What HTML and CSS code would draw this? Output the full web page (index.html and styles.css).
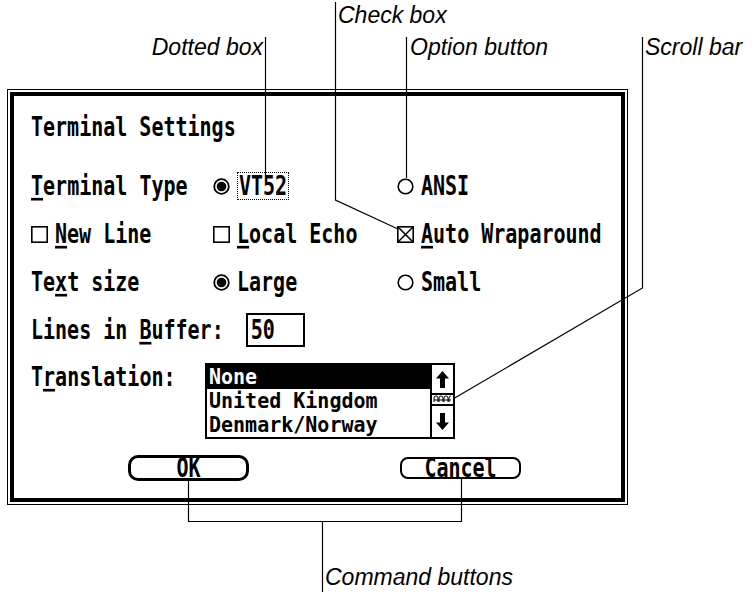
FILE: index.html
```html
<!DOCTYPE html>
<html>
<head>
<meta charset="utf-8">
<link rel="stylesheet" href="styles.css">
</head>
<body>
<div class="figure">
  <div class="frame">
    <div class="dialog">
      <div class="title"><span class="tx">Terminal Settings</span></div>

      <div class="grid">
        <div class="cell"><span class="tx"><u>T</u>erminal Type</span></div>
        <div class="cell">
          <svg class="ico" viewBox="0 0 17 17"><circle cx="8.5" cy="8.5" r="7.3" fill="none" stroke="#000" stroke-width="1.8"/><circle cx="8.5" cy="8.5" r="4.8" fill="#000"/></svg>
          <span class="focus"><span class="tx">VT52</span></span>
        </div>
        <div class="cell">
          <svg class="ico" viewBox="0 0 17 17"><circle cx="8.5" cy="8.5" r="7.3" fill="none" stroke="#000" stroke-width="1.6"/></svg>
          <span class="tx">ANSI</span>
        </div>

        <div class="cell">
          <svg class="ico" viewBox="0 0 17 17"><rect x="0.8" y="0.8" width="15.4" height="15.4" fill="none" stroke="#000" stroke-width="1.6"/></svg>
          <span class="tx"><u>N</u>ew Line</span>
        </div>
        <div class="cell">
          <svg class="ico" viewBox="0 0 17 17"><rect x="0.8" y="0.8" width="15.4" height="15.4" fill="none" stroke="#000" stroke-width="1.6"/></svg>
          <span class="tx"><u>L</u>ocal Echo</span>
        </div>
        <div class="cell">
          <svg class="ico" viewBox="0 0 17 17"><rect x="0.8" y="0.8" width="15.4" height="15.4" fill="none" stroke="#000" stroke-width="1.6"/><path d="M1 1 L16 16 M16 1 L1 16" stroke="#000" stroke-width="1.5"/></svg>
          <span class="tx"><u>A</u>uto Wraparound</span>
        </div>

        <div class="cell"><span class="tx">Te<u>x</u>t size</span></div>
        <div class="cell">
          <svg class="ico" viewBox="0 0 17 17"><circle cx="8.5" cy="8.5" r="7.3" fill="none" stroke="#000" stroke-width="1.8"/><circle cx="8.5" cy="8.5" r="4.8" fill="#000"/></svg>
          <span class="tx">Large</span>
        </div>
        <div class="cell">
          <svg class="ico" viewBox="0 0 17 17"><circle cx="8.5" cy="8.5" r="7.3" fill="none" stroke="#000" stroke-width="1.6"/></svg>
          <span class="tx">Small</span>
        </div>
      </div>

      <div class="row buffer">
        <span class="tx">Lines in <u>B</u>uffer:</span>
        <div class="field"><span class="tx">50</span></div>
      </div>

      <div class="row translation">
        <div class="label-col"><span class="tx">T<u>r</u>anslation:</span></div>
        <div class="listbox">
          <div class="items">
            <div class="item sel"><span class="tx">None</span></div>
            <div class="item"><span class="tx">United Kingdom</span></div>
            <div class="item"><span class="tx">Denmark/Norway</span></div>
          </div>
          <div class="scroll">
            <div class="arrow up">
              <svg viewBox="0 0 13 17" width="13" height="17"><path d="M6.5 0 L13 7.5 L9 7.5 L9 17 L4 17 L4 7.5 L0 7.5 Z" fill="#000"/></svg>
            </div>
            <div class="thumb">
              <svg viewBox="0 0 19 9" width="19" height="9"><path d="M1 7 V3 Q1 1 3 1 Q5 1 5 3 V7 M6 7 V3 Q6 1 8 1 Q10 1 10 3 V7 M11 7 V3 Q11 1 13 1 Q15 1 15 3 V7 M16 7 V3 Q16 1 18 1 M1 5 H18" fill="none" stroke="#000" stroke-width="1"/></svg>
            </div>
            <div class="arrow down">
              <svg viewBox="0 0 13 17" width="13" height="17"><path d="M6.5 17 L13 9.5 L9 9.5 L9 0 L4 0 L4 9.5 L0 9.5 Z" fill="#000"/></svg>
            </div>
          </div>
        </div>
      </div>

      <div class="buttons">
        <div class="btn default"><span class="tx">OK</span></div>
        <div class="btn"><span class="tx">Cancel</span></div>
      </div>
    </div>
  </div>

  <svg class="callouts" viewBox="0 0 754 594" width="754" height="594">
    <g fill="none" stroke="#000" stroke-width="1.2">
      <path d="M265.5 37 V175"/>
      <path d="M335.5 2 V200 L398 229"/>
      <path d="M406.5 37 V178"/>
      <path d="M642.5 37 V288 L453 399"/>
      <path d="M188.5 481 V521.5 H461.5 V479"/>
      <path d="M322.5 521.5 V592"/>
    </g>
  </svg>
  <span class="note n-dotted">Dotted box</span>
  <span class="note n-check">Check box</span>
  <span class="note n-option">Option button</span>
  <span class="note n-scroll">Scroll bar</span>
  <span class="note n-command">Command buttons</span>
</div>
</body>
</html>
```

FILE: styles.css
```css
html, body {
  margin: 0;
  padding: 0;
  background: #fff;
}

.figure {
  position: relative;
  width: 754px;
  height: 594px;
  overflow: hidden;
  background: #fff;
  color: #000;
  font-family: "DejaVu Sans Mono", "Liberation Mono", monospace;
  font-weight: bold;
  font-size: 20px;
}

.frame {
  margin: 89px 0 0 7px;
  width: 621px;
  box-sizing: border-box;
  border: 1px solid #000;
  padding: 2px;
}

.dialog {
  border: 4px solid #000;
  padding: 0 0 17px 17px;
}

.tx {
  display: inline-block;
  white-space: pre;
  line-height: 28px;
  transform: scaleY(1.32);
}

.tx u {
  text-decoration: underline;
  text-decoration-thickness: 2px;
  text-underline-offset: 2px;
}

.title {
  height: 40px;
  margin-top: 11px;
  display: flex;
  align-items: center;
}

.grid {
  margin-top: 19px;
  display: grid;
  grid-template-columns: 182px 184px 1fr;
  grid-auto-rows: 40px;
  row-gap: 8px;
}

.cell {
  display: flex;
  align-items: center;
  gap: 7px;
}

.ico {
  width: 17px;
  height: 17px;
  flex: none;
}

.focus {
  display: inline-flex;
  align-items: center;
  height: 26px;
  padding: 0 1px;
  border: 1px dotted #000;
}

.focus .tx {
  line-height: 19px;
}

.row {
  display: flex;
  align-items: center;
}

.buffer {
  height: 40px;
  margin-top: 8px;
  gap: 22px;
}

.field {
  width: 59px;
  height: 34px;
  box-sizing: border-box;
  border: 2px solid #000;
  padding-left: 3px;
  display: flex;
  align-items: center;
}

.field .tx {
  line-height: 22px;
}

.translation {
  margin-top: 13px;
  align-items: flex-start;
}

.label-col {
  width: 174px;
  height: 28px;
  display: flex;
  align-items: center;
}

.label-col .tx {
  line-height: 20px;
}

.listbox {
  width: 250px;
  height: 76px;
  box-sizing: border-box;
  border: 2px solid #000;
  display: flex;
}

.items {
  flex: 1;
}

.item {
  height: 24px;
  padding-left: 2px;
  display: flex;
  align-items: center;
}

.item .tx {
  line-height: 24px;
  transform: scaleY(1.03);
}

.item.sel {
  background: #000;
  color: #fff;
}

.scroll {
  width: 21px;
  border-left: 2px solid #000;
  display: flex;
  flex-direction: column;
}

.arrow {
  display: flex;
  align-items: center;
  justify-content: center;
}

.arrow.up {
  height: 28px;
  border-bottom: 2px solid #000;
}

.thumb {
  height: 9px;
  display: flex;
  align-items: center;
  justify-content: center;
}

.arrow.down {
  flex: 1;
  border-top: 2px solid #000;
}

.buttons {
  margin-top: 16px;
  padding-left: 97px;
  display: flex;
  align-items: center;
  gap: 151px;
}

.btn {
  width: 121px;
  height: 22px;
  box-sizing: border-box;
  border: 2px solid #000;
  border-radius: 8px;
  display: flex;
  align-items: center;
  justify-content: center;
}

.btn .tx {
  line-height: 14px;
}

.btn.default {
  height: 26px;
  border-width: 3px;
  border-radius: 10px;
}

.callouts {
  position: absolute;
  left: 0;
  top: 0;
  pointer-events: none;
}

.note {
  position: absolute;
  font-family: "Liberation Sans", Arial, sans-serif;
  font-style: italic;
  font-weight: normal;
  font-size: 23px;
  line-height: 26px;
  white-space: nowrap;
}

.n-dotted { right: 491px; top: 34px; }
.n-check { left: 338px; top: 2px; }
.n-option { left: 410px; top: 34px; }
.n-scroll { left: 645px; top: 34px; }
.n-command { left: 325px; top: 564px; }
```
